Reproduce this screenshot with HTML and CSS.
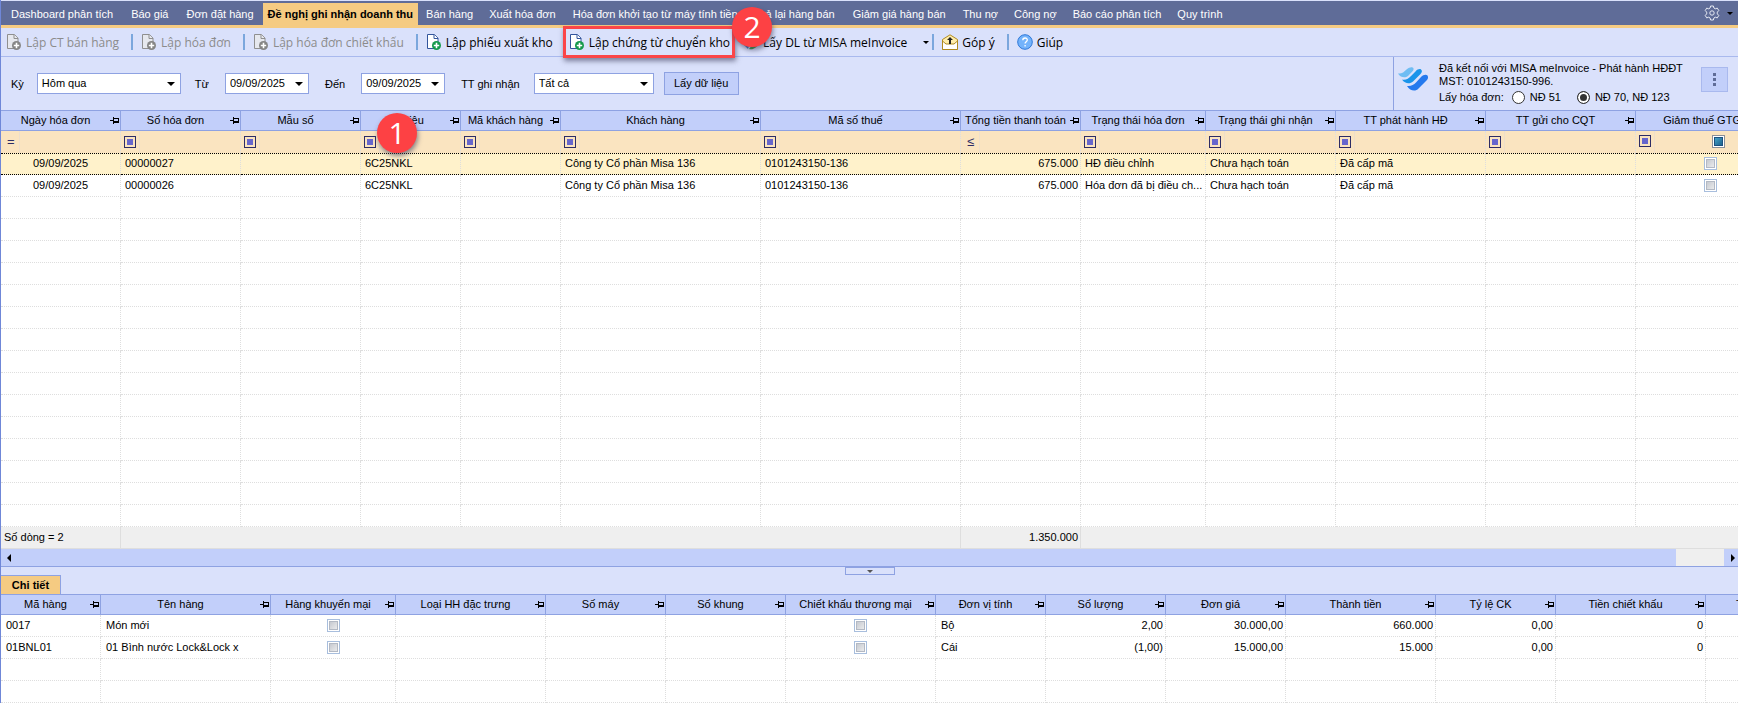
FILE: index.html
```html
<!DOCTYPE html>
<html lang="vi">
<head>
    <meta charset="UTF-8">
    <meta name="viewport" content="width=device-width, initial-scale=1.0">
    <title>Đề nghị ghi nhận doanh thu</title>
    <link rel="stylesheet" href="styles.css">
</head>
<body>
    <svg width="0" height="0" class="sprite">
        <symbol id="doc-add" viewBox="0 0 16 18">
            <path class="sheet" d="M1.500 1.500h7l3.500 3.500v10.500H1.500z"/>
            <path class="fold" d="M8 1.500v4h4"/>
            <circle class="plus" cx="10.500" cy="12.500" r="4.500"/>
            <path stroke="#fff" stroke-width="1.600" d="M10.500 9.800v5.400M7.800 12.500h5.400"/>
        </symbol>
        <symbol id="pin" viewBox="0 0 9 7">
            <g shape-rendering="crispEdges">
                <path d="M0 3h3v1H0zM3 0h1v7H3zM4 1h5v1H4zM4 4h5v2H4zM8 1h1v4H8z"/>
            </g>
        </symbol>
    </svg>

    <nav class="tabs">
        <a href="#">Dashboard phân tích</a>
        <a href="#">Báo giá</a>
        <a href="#">Đơn đặt hàng</a>
        <a href="#" class="active">Đề nghị ghi nhận doanh thu</a>
        <a href="#" class="narrow">Bán hàng</a>
        <a href="#" class="narrow">Xuất hóa đơn</a>
        <a href="#">Hóa đơn khởi tạo từ máy tính tiền</a>
        <a href="#">Trả lại hàng bán</a>
        <a href="#">Giảm giá hàng bán</a>
        <a href="#" class="narrow">Thu nợ</a>
        <a href="#" class="narrow">Công nợ</a>
        <a href="#" class="narrow">Báo cáo phân tích</a>
        <a href="#" class="narrow">Quy trình</a>
        <button class="settings" type="button" aria-label="Tùy chọn">
            <svg width="16" height="16" viewBox="0 0 16 16" fill="none" stroke="#e6e9f3">
                <path d="M6.600 1h2.800l.5 2 1.400.8 2-.7 1.500 2.500-1.500 1.500v1.800l1.500 1.500-1.500 2.500-2-.7-1.400.8-.5 2H6.600l-.5-2-1.400-.8-2 .7-1.500-2.500 1.500-1.500V7.100L1.200 5.600l1.500-2.500 2 .7 1.400-.8z"/>
                <circle cx="8" cy="8" r="2.200"/>
            </svg>
            <span class="caret"></span>
        </button>
    </nav>

    <div class="toolbar">
        <button type="button" disabled><svg class="icon" width="16" height="18"><use href="#doc-add"/></svg>Lập CT bán hàng</button>
        <i class="sep"></i>
        <button type="button" disabled><svg class="icon" width="16" height="18"><use href="#doc-add"/></svg>Lập hóa đơn</button>
        <i class="sep"></i>
        <button type="button" disabled><svg class="icon" width="16" height="18"><use href="#doc-add"/></svg>Lập hóa đơn chiết khấu</button>
        <i class="sep"></i>
        <button type="button"><svg class="icon" width="16" height="18"><use href="#doc-add"/></svg>Lập phiếu xuất kho</button>
        <button type="button" class="marked"><svg class="icon" width="16" height="18"><use href="#doc-add"/></svg>Lập chứng từ chuyển kho<span class="badge badge-2">2</span></button>
        <button type="button" class="sync">
            <svg class="icon" width="16" height="18" viewBox="0 0 16 18">
                <path fill="#2b78c5" d="M1 8a7 7 0 0 1 11-4l-2 2a4 4 0 0 0-6 3l3 1-2 6-4-4z"/>
                <path fill="#3a9d3a" d="M15 9a7 7 0 0 1-9 7l4-5h2V8z"/>
            </svg>Lấy DL từ MISA meInvoice<span class="caret"></span></button>
        <i class="sep"></i>
        <button type="button">
            <svg class="icon" width="16" height="16" viewBox="0 0 16 16">
                <path fill="#ffedaa" stroke="#b08a20" d="M.5 15.500v-10L8 .8l7.500 4.700v10z"/>
                <path fill="#fff" stroke="#b08a20" d="M.5 15.500V7L4 10h8l3.500-3v8.500z"/>
                <path fill="#222" d="M8 3l3 3H9v4H7V6H5z"/>
            </svg>Góp ý</button>
        <i class="sep"></i>
        <button type="button">
            <svg class="icon" width="16" height="16" viewBox="0 0 16 16">
                <circle cx="8" cy="8" r="7.300" fill="#74b3fb" stroke="#2f78d8"/>
                <path fill="none" stroke="#fff" stroke-width="1.300" d="M5.800 6.200c0-3 4.600-2.800 4.500-.2 0 1.700-2.200 1.700-2.200 3.500M8.100 11v1.600"/>
            </svg>Giúp</button>
    </div>

    <div class="filters">
        <form class="criteria">
            <label for="period">Kỳ</label>
            <span class="combo combo-period"><select id="period"><option>Hôm qua</option></select></span>
            <label for="from">Từ</label>
            <span class="combo combo-date"><select id="from"><option>09/09/2025</option></select></span>
            <label for="to">Đến</label>
            <span class="combo combo-date"><select id="to"><option>09/09/2025</option></select></span>
            <label for="status">TT ghi nhận</label>
            <span class="combo combo-status"><select id="status"><option>Tất cả</option></select></span>
            <button type="button">Lấy dữ liệu</button>
        </form>
        <div class="connection">
            <svg width="30" height="24" viewBox="0 0 30 24">
                <path fill="#6fbdf3" d="M0 6.500c3.500.6 6-1.500 8.500-4C10.500.6 12.500 0 14 .2c2 .5 2 2.500.8 3.800L10 9c-3 2.500-7.500 1.500-10-2.500z"/>
                <path fill="#1a94ea" d="M4 12.500c4 .8 6.500-1 9-3.500l4.500-4.500C19.500 2 22 1.500 23 2.500c1.500 1 1 3-.5 4.500L15 14.500c-3 2.700-8 2.500-11-2z"/>
                <path fill="#2479ee" d="M9 19c4 .5 6.500-1 9-3.500l5-5.500c2-2 5-3 6.500-1.500 1.200 2 .2 4-1.500 5.500l-7.500 7.500C17.500 25 12 24 9 19z"/>
            </svg>
            <div class="connection-text">
                <p>Đã kết nối với MISA meInvoice - Phát hành HĐĐT</p>
                <p>MST: 0101243150-996.</p>
                <div class="decree">
                    <span>Lấy hóa đơn:</span>
                    <label><input type="radio" name="decree">NĐ 51</label>
                    <label><input type="radio" name="decree" checked>NĐ 70, NĐ 123</label>
                </div>
            </div>
            <button type="button" class="more" aria-label="Thêm"><i></i><i></i><i></i></button>
        </div>
    </div>

    <div class="pane">
        <table class="grid invoices" data-blank-rows="15">
            <colgroup>
                <col style="width: 120px"><col style="width: 120px"><col style="width: 120px"><col style="width: 100px">
                <col style="width: 100px"><col style="width: 200px"><col style="width: 200px"><col style="width: 120px">
                <col style="width: 125px"><col style="width: 130px"><col style="width: 150px"><col style="width: 150px"><col style="width: 150px">
            </colgroup>
            <thead>
                <tr>
                    <th>Ngày hóa đơn</th><th>Số hóa đơn</th><th>Mẫu số</th><th class="has-badge">Ký hiệu</th><th>Mã khách hàng</th>
                    <th>Khách hàng</th><th>Mã số thuế</th><th>Tổng tiền thanh toán</th><th>Trạng thái hóa đơn</th>
                    <th>Trạng thái ghi nhận</th><th>TT phát hành HĐ</th><th>TT gửi cho CQT</th><th>Giảm thuế GTGT</th>
                </tr>
            </thead>
            <tbody>
                <tr class="filter-row">
                    <td><span class="op">=</span></td><td><i class="any"></i></td><td><i class="any"></i></td><td><i class="any"></i></td>
                    <td><i class="any"></i></td><td><i class="any"></i></td><td><i class="any"></i></td><td><span class="op">≤</span></td>
                    <td><i class="any"></i></td><td><i class="any"></i></td><td><i class="any"></i></td><td><i class="any"></i></td>
                    <td><div class="any-check"><i class="any"></i><input type="checkbox" class="mixed" aria-label="Lọc giảm thuế"></div></td>
                </tr>
                <tr class="selected">
                    <td class="center">09/09/2025</td><td>00000027</td><td></td><td>6C25NKL</td><td></td>
                    <td>Công ty Cổ phần Misa 136</td><td>0101243150-136</td><td class="num">675.000</td><td>HĐ điều chỉnh</td>
                    <td>Chưa hạch toán</td><td>Đã cấp mã</td><td></td><td class="center"><input type="checkbox" aria-label="Giảm thuế"></td>
                </tr>
                <tr>
                    <td class="center">09/09/2025</td><td>00000026</td><td></td><td>6C25NKL</td><td></td>
                    <td>Công ty Cổ phần Misa 136</td><td>0101243150-136</td><td class="num">675.000</td><td>Hóa đơn đã bị điều ch...</td>
                    <td>Chưa hạch toán</td><td>Đã cấp mã</td><td></td><td class="center"><input type="checkbox" aria-label="Giảm thuế"></td>
                </tr>
            </tbody>
            <tfoot>
                <tr>
                    <td>Số dòng = 2</td><td colspan="6"></td><td class="num">1.350.000</td><td colspan="5"></td>
                </tr>
            </tfoot>
        </table>
    </div>
    <div class="scrollbar">
        <i class="arrow-left"></i>
        <div class="track"></div>
        <i class="arrow-right"></i>
    </div>

    <div class="splitter">
        <button type="button" class="collapse" aria-label="Thu gọn"><span class="caret"></span></button>
        <button type="button" class="detail-tab">Chi tiết</button>
    </div>

    <div class="pane">
        <table class="grid details" data-blank-rows="2">
            <colgroup>
                <col style="width: 100px"><col style="width: 170px"><col style="width: 125px"><col style="width: 150px">
                <col style="width: 120px"><col style="width: 120px"><col style="width: 150px"><col style="width: 110px">
                <col style="width: 120px"><col style="width: 120px"><col style="width: 150px"><col style="width: 120px">
                <col style="width: 150px"><col style="width: 150px">
            </colgroup>
            <thead>
                <tr>
                    <th>Mã hàng</th><th>Tên hàng</th><th>Hàng khuyến mại</th><th>Loại HH đặc trưng</th><th>Số máy</th>
                    <th>Số khung</th><th>Chiết khấu thương mại</th><th>Đơn vị tính</th><th>Số lượng</th><th>Đơn giá</th>
                    <th>Thành tiền</th><th>Tỷ lệ CK</th><th>Tiền chiết khấu</th><th>Tiền thuế GTGT</th>
                </tr>
            </thead>
            <tbody>
                <tr>
                    <td>0017</td><td>Món mới</td><td class="center"><input type="checkbox" aria-label="Hàng khuyến mại"></td><td></td><td></td><td></td>
                    <td class="center"><input type="checkbox" aria-label="Chiết khấu"></td><td>Bộ</td><td class="num">2,00</td><td class="num">30.000,00</td>
                    <td class="num">660.000</td><td class="num">0,00</td><td class="num">0</td><td></td>
                </tr>
                <tr>
                    <td>01BNL01</td><td>01 Bình nước Lock&amp;Lock x</td><td class="center"><input type="checkbox" aria-label="Hàng khuyến mại"></td><td></td><td></td><td></td>
                    <td class="center"><input type="checkbox" aria-label="Chiết khấu"></td><td>Cái</td><td class="num">(1,00)</td><td class="num">15.000,00</td>
                    <td class="num">15.000</td><td class="num">0,00</td><td class="num">0</td><td></td>
                </tr>
            </tbody>
        </table>
    </div>

    <script>
        // Ghim ở góc phải mỗi tiêu đề cột
        document.querySelectorAll(".grid th").forEach(function (th) {
            var badge = th.className == "has-badge" ? '<b class="badge badge-1">1</b>' : '';
            th.innerHTML = '<div class="head"><span>' + th.textContent + '</span>' +
                '<svg width="9" height="7"><use href="#pin"/></svg></div>' + badge;
        });

        // Thêm các dòng trống cho đầy lưới
        document.querySelectorAll(".grid").forEach(function (grid) {
            var cols = grid.querySelectorAll("col").length;
            for (var i = 0; i < grid.dataset.blankRows; i++) {
                var row = grid.tBodies[0].insertRow();
                for (var j = 0; j < cols; j++) {
                    row.insertCell();
                }
            }
        });
    </script>
</body>
</html>
```
FILE: styles.css
```css
* {
    box-sizing: border-box;
}

html {
    height: 100%;
}

body {
    margin: 0;
    min-height: 100%;
    border-left: 1px solid #6f87d8;
    background-color: #dae1fb;
    color: #000;
    font-family: "Liberation Sans", Arial, sans-serif;
    font-size: 11px;
    line-height: 13px;
    overflow: hidden;
}

button,
select {
    font-family: inherit;
    font-size: inherit;
    line-height: inherit;
    color: inherit;
}

p {
    margin: 0;
}

.sprite {
    position: absolute;
}

.caret {
    border: 3px solid transparent;
    border-top-color: #000;
    border-bottom: 0;
}

/* Thanh tab */
.tabs {
    display: flex;
    align-items: flex-end;
    height: 28px;
    padding-left: 1px;
    border-top: 1px solid #dae1fb;
    border-bottom: 3px solid #f5cb82;
    background-color: #5f6c98;
    white-space: nowrap;
}

.tabs a {
    height: 22px;
    padding: 5px 9px 0;
    color: #fff;
    text-decoration: none;
}

.tabs a.active {
    padding: 5px 5px 0;
    background-color: #f5cb82;
    color: #000;
    font-weight: bold;
}

.tabs a.narrow {
    padding: 5px 8px 0;
}

.settings {
    display: flex;
    align-items: center;
    gap: 7px;
    align-self: center;
    margin-left: auto;
    padding: 0 5px;
    border: 0;
    background: none;
}

/* Thanh công cụ */
.toolbar {
    display: flex;
    align-items: center;
    height: 29px;
    padding-left: 5px;
    border-bottom: 1px solid #a9b9ee;
    font-family: "Open Sans", "Noto Sans", sans-serif;
    font-size: 12px;
    white-space: nowrap;
}

.toolbar button {
    --sheet: #fff;
    --line: #33559c;
    --plus: #14994a;
    display: flex;
    align-items: center;
    gap: 4px;
    height: 28px;
    padding: 0;
    border: 0;
    background: none;
}

.toolbar button:disabled {
    --sheet: #e6e8ee;
    --line: #8f8f8f;
    --plus: #858585;
    color: #8c8c8c;
}

.toolbar .icon {
    flex: none;
}

.sheet,
.fold {
    fill: var(--sheet);
    stroke: var(--line);
}

.plus {
    fill: var(--plus);
}

.sep {
    width: 2px;
    height: 16px;
    margin: 0 8px 0 12px;
    background-color: #7ba7dd;
}

.toolbar .marked {
    position: relative;
    z-index: 2;
    height: 32px;
    margin: 0 8px 0 10px;
    padding: 0 2px 0 3px;
    border: 3px solid #fb4548;
    box-shadow: 1px 3px 5px rgba(60, 60, 90, 0.6);
}

.sync .caret {
    margin-left: 12px;
}

.sync + .sep {
    margin-left: 3px;
}

.badge {
    position: absolute;
    z-index: 3;
    width: 40px;
    height: 40px;
    border-radius: 50%;
    background-color: #fd4144;
    box-shadow: 1px 3px 5px rgba(60, 60, 90, 0.6);
    color: #fff;
    font-family: "Open Sans", sans-serif;
    font-size: 30px;
    font-weight: normal;
    line-height: 40px;
    text-align: center;
}

.badge-1 {
    top: 2px;
    left: 16px;
}

.badge-2 {
    top: -22px;
    right: -40px;
}

/* Điều kiện lọc */
.filters {
    display: flex;
    justify-content: space-between;
    height: 53px;
}

.criteria {
    display: flex;
    align-items: center;
    padding-left: 10px;
    white-space: nowrap;
}

.criteria label {
    margin-top: 2px;
}

.combo {
    position: relative;
    margin: 0 16px;
}

.combo::after {
    content: "";
    position: absolute;
    top: 9px;
    right: 6px;
    border: 4px solid transparent;
    border-top-color: #000;
    border-bottom: 0;
    pointer-events: none;
}

.combo select {
    display: block;
    width: 100%;
    height: 21px;
    padding: 0 4px 1px;
    border: 1px solid #8ea2e2;
    border-radius: 0;
    background-color: #fff;
    appearance: none;
}

.combo-period {
    width: 144px;
    margin: 0 14px 0 13px;
}

.combo-date {
    width: 84px;
}

.combo-status {
    width: 120px;
    margin: 0 10px 0 14px;
}

.criteria button {
    width: 75px;
    height: 23px;
    padding: 0;
    border: 1px solid #8ea2e2;
    background-color: #c2cffa;
}

.connection {
    display: flex;
    gap: 11px;
    width: 345px;
    padding: 5px 10px 0 4px;
    border-left: 1px solid #8ea2e2;
    white-space: nowrap;
}

.connection svg {
    flex: none;
    margin-top: 5px;
}

.decree {
    display: flex;
    align-items: center;
    margin-top: 3px;
}

.decree label {
    display: flex;
    align-items: center;
    gap: 5px;
    margin-left: 8px;
}

.decree label + label {
    margin-left: 16px;
}

.decree input {
    width: 13px;
    height: 13px;
    margin: 0;
    border: 1px solid #333;
    border-radius: 50%;
    background-color: #fff;
    appearance: none;
}

.decree input:checked {
    background-color: #333;
    box-shadow: inset 0 0 0 2px #fff;
}

.more {
    display: flex;
    flex-direction: column;
    align-items: center;
    justify-content: center;
    gap: 2px;
    width: 27px;
    height: 25px;
    margin: 5px 0 0 auto;
    border: 1px solid #a9b9ee;
    background-color: #c2cffa;
}

.more i {
    width: 3px;
    height: 3px;
    background-color: #5f6c98;
}

/* Lưới dữ liệu */
.pane {
    overflow: hidden;
}

.grid {
    width: 0;
    table-layout: fixed;
    border-collapse: separate;
    border-spacing: 0;
    background-color: #fff;
    white-space: nowrap;
}

.grid th {
    position: relative;
    height: 21px;
    padding: 0;
    border: solid #8ea2e2;
    border-width: 1px 1px 1px 0;
    background-color: #c2cffa;
    font-weight: normal;
}

.head {
    display: flex;
    align-items: center;
    padding-right: 1px;
}

.head span {
    flex: 1;
    text-align: center;
}

.head svg {
    flex: none;
}

.grid td {
    height: 22px;
    padding: 0 2px 0 4px;
    border: dotted #dedede;
    border-width: 0 1px 1px 0;
    overflow: hidden;
}

.details td {
    padding: 0 3px 0 5px;
}

.grid .center {
    padding: 0;
    text-align: center;
}

.grid .num {
    padding-right: 2px;
    text-align: right;
}

.grid .filter-row td {
    padding: 0 0 1px 3px;
    border-bottom: 0;
    background: #fae4c0 linear-gradient(#eedfca, #eedfca) 18px 0 / 1px 100% no-repeat;
}

.grid .selected td {
    padding-bottom: 1px;
    border-top: 1px dotted #000;
    border-bottom-color: #000;
    background-color: #fff2cb;
}

.any {
    display: block;
    width: 12px;
    height: 12px;
    border: 1px solid #2c2c66;
    background-color: #6666cc;
    box-shadow: inset 0 0 0 2px #fae4c0;
}

.op {
    padding-left: 3px;
    color: #2c2c66;
    font-size: 13px;
}

.any-check {
    display: flex;
}

.grid input {
    display: inline-block;
    width: 13px;
    height: 13px;
    margin: 0;
    border: 1px solid #a8bedd;
    background-image: linear-gradient(135deg, #bcc0c8, #f4f4f4);
    box-shadow: inset 0 0 0 1px #fff, inset 0 0 0 2px #b3b9c4;
    appearance: none;
    vertical-align: middle;
}

.grid .mixed {
    margin: 0 auto;
    border-color: #8a8f98;
    background-image: linear-gradient(135deg, #4fb4d8, #12507c);
    box-shadow: inset 0 0 0 1px #fff, inset 0 0 0 2px #1c5180;
}

.grid tfoot td {
    padding-left: 3px;
    border: solid #dedede;
    border-width: 0 1px 1px 0;
    background-color: #efefef;
}

/* Thanh cuộn ngang */
.scrollbar {
    display: flex;
    align-items: center;
    height: 18px;
    padding: 0 3px 0 6px;
    border-bottom: 1px solid #8ea2e2;
    background-color: #c2cffa;
}

.track {
    width: 48px;
    height: 17px;
    margin-left: auto;
    margin-right: 7px;
    background-color: #efefef;
}

.arrow-left,
.arrow-right {
    border: 4px solid transparent;
}

.arrow-left {
    border-right-color: #000;
    border-left: 0;
}

.arrow-right {
    border-left-color: #000;
    border-right: 0;
}

.splitter {
    display: flex;
    flex-direction: column;
    height: 27px;
}

.collapse {
    display: flex;
    align-items: center;
    justify-content: center;
    align-self: center;
    width: 50px;
    height: 8px;
    padding: 0;
    border: 1px solid #8ea2e2;
    background: none;
}

.collapse .caret {
    border-top-color: #555;
}

.detail-tab {
    width: 60px;
    height: 19px;
    padding: 0;
    border: 1px solid #8ea2e2;
    border-width: 1px 1px 0 0;
    background-color: #f5cb82;
    font-weight: bold;
}
```
